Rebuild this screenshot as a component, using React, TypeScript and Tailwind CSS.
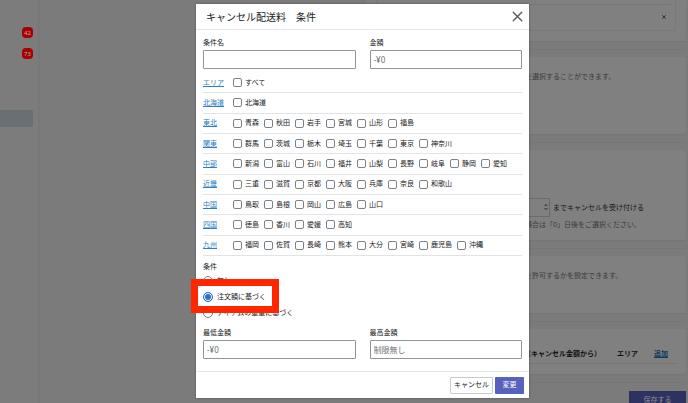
import { X, ChevronUp, ChevronDown } from 'lucide-react';

const regions: { name: string; items: string[] }[] = [
  { name: 'エリア', items: ['すべて'] },
  { name: '北海道', items: ['北海道'] },
  { name: '東北', items: ['青森', '秋田', '岩手', '宮城', '山形', '福島'] },
  { name: '関東', items: ['群馬', '茨城', '栃木', '埼玉', '千葉', '東京', '神奈川'] },
  { name: '中部', items: ['新潟', '富山', '石川', '福井', '山梨', '長野', '岐阜', '静岡', '愛知'] },
  { name: '近畿', items: ['三重', '滋賀', '京都', '大阪', '兵庫', '奈良', '和歌山'] },
  { name: '中国', items: ['鳥取', '島根', '岡山', '広島', '山口'] },
  { name: '四国', items: ['徳島', '香川', '愛媛', '高知'] },
  { name: '九州', items: ['福岡', '佐賀', '長崎', '熊本', '大分', '宮崎', '鹿児島', '沖縄'] },
];

function Field({ id, label, placeholder }: { id: string; label: string; placeholder?: string }) {
  return (
    <div className="flex min-w-0 flex-col gap-[2px]">
      <label htmlFor={id} className="text-[7px] leading-[10px]">{label}</label>
      <input
        id={id}
        type="text"
        placeholder={placeholder}
        className="h-[19px] w-full rounded-[1px] border border-[#8f9499] bg-white px-[3px] text-[8px] outline-none placeholder:text-[#6d7175]"
      />
    </div>
  );
}

function Choice({ id, label, selected, annotated }: { id: string; label: string; selected?: boolean; annotated?: boolean }) {
  return (
    <div className="relative flex h-4 items-center gap-1">
      <input
        id={id}
        type="radio"
        name="basis"
        defaultChecked={selected}
        className="size-[10px] appearance-none rounded-full border border-[#7c8186] bg-white checked:border-[#2c6ecb] checked:bg-[#2c6ecb] checked:shadow-[inset_0_0_0_1px_white]"
      />
      <label htmlFor={id} className="text-[7px] leading-[10px]">{label}</label>
      {annotated && <div className="pointer-events-none absolute -top-[10px] -left-3 z-10 h-[34px] w-[88px] border-[7px] border-[#ff2600]" />}
    </div>
  );
}

function Backdrop() {
  return (
    <div className="flex h-full bg-[#7b7b7b]">
      <aside className="flex w-10 shrink-0 flex-col items-end border-r-2 border-[#777878] bg-[#7c7c7c] pt-[27px] pr-[5px]">
        <span className="flex h-[11px] w-[11px] items-center justify-center rounded-[4px] bg-[#a80000] text-[6px] leading-none text-[#c4a8a8]">42</span>
        <span className="mt-[10px] flex h-[11px] w-[11px] items-center justify-center rounded-[4px] bg-[#a80000] text-[6px] leading-none text-[#c4a8a8]">73</span>
        <div className="mt-[51px] h-[17px] w-full rounded-r-[1px] bg-[#697074]" />
      </aside>
      <main className="flex min-w-0 flex-1 flex-col items-end overflow-hidden pr-[2px] text-[7px] leading-[10px]">
        <section className="h-[41px] w-80 shrink-0 rounded-b-[2px] bg-[#808080] pr-[10px] pb-[10px] pl-[10px] shadow-xs">
          <div className="h-full border border-t-0 border-[#797979] px-1 pt-1">
            <div className="flex h-6 items-center justify-end border-t border-[#757575] pr-1">
              <button type="button" aria-label="削除"><X className="size-[6px] text-[#303030]" strokeWidth={4} /></button>
            </div>
          </div>
        </section>
        <hr className="mt-2 w-80 shrink-0 border-[#767676]" />
        <section className="mt-[7px] h-[77px] w-80 shrink-0 rounded-[2px] bg-[#808080] pt-[15px] shadow-xs">
          <p className="pl-[159px] text-[#3a3c3d]">を選択することができます。</p>
        </section>
        <hr className="mt-2 w-80 shrink-0 border-[#767676]" />
        <section className="mt-[7px] h-[90px] w-80 shrink-0 rounded-[2px] bg-[#808080] pt-12 shadow-xs">
          <div className="flex items-center gap-[3px] text-[#141516]">
            <div className="relative ml-24 w-[88px]">
              <select id="deadline" aria-label="日数" className="block h-[19px] w-full appearance-none border border-[#6b6b6b]" />
              <span className="pointer-events-none absolute top-[5px] right-[2px] flex flex-col">
                <ChevronUp className="size-1" strokeWidth={6} />
                <ChevronDown className="size-1" strokeWidth={6} />
              </span>
            </div>
            <label htmlFor="deadline">までキャンセルを受け付ける</label>
          </div>
          <p className="mt-[3px] pl-[159px] whitespace-nowrap text-[#3a3c3d]">場合は「0」日後をご選択ください。</p>
        </section>
        <hr className="mt-2 w-80 shrink-0 border-[#767676]" />
        <section className="mt-[7px] h-[57px] w-80 shrink-0 rounded-[2px] bg-[#808080] pt-[15px] shadow-xs">
          <p className="pl-[159px] text-[#3a3c3d]">を許可するかを設定できます。</p>
        </section>
        <hr className="mt-2 w-80 shrink-0 border-[#767676]" />
        <section className="mt-[7px] h-[45px] w-80 shrink-0 rounded-[2px] bg-[#808080] px-[10px] pt-[15px] shadow-xs">
          <div className="flex h-5 items-center justify-end border-b border-[#747474] pr-2 font-bold text-[#101112]">
            <span className="mr-4">（キャンセル金額から）</span>
            <span className="mr-4">エリア</span>
            <a href="#add" className="text-[#0b3c5e] underline">追加</a>
          </div>
        </section>
        <hr className="mt-2 w-80 shrink-0 border-[#767676]" />
        <button type="button" className="mt-2 h-[17px] w-[57px] shrink-0 bg-[#2e3260] text-[7px] leading-[10px] text-[#8b8b8b]">保存する</button>
      </main>
    </div>
  );
}

export default function App() {
  return (
    <div className="relative h-screen overflow-hidden font-['Noto_Sans','Noto_Sans_CJK_JP',sans-serif] text-[#202223]">
      <Backdrop />
      <div className="absolute inset-0 flex items-start justify-center pt-1 pl-[37px]">
        <div role="dialog" aria-labelledby="dialog-title" className="flex w-[333px] flex-col bg-white shadow-[0_0_2px_#505050]">
          <header className="flex h-[26px] items-center justify-between border-b border-[#e4e5e7] pr-[3px] pl-[10px]">
            <h1 id="dialog-title" className="text-[10px] leading-4">キャンセル配送料　条件</h1>
            <button type="button" aria-label="閉じる"><X className="size-[17px] text-[#5c5f62]" strokeWidth={2} /></button>
          </header>
          <div className="px-[7px] pt-2 pb-3">
            <div className="grid grid-cols-2 gap-[14px]">
              <Field id="name" label="条件名" />
              <Field id="amount" label="金額" placeholder="-¥0" />
            </div>
            <div className="mt-1 grid min-h-[183px] auto-rows-fr">
              {regions.map((region) => (
                <div key={region.name} className="flex items-center border-b border-[#e1e3e5] text-[7px] leading-[10px]">
                  <a href="#region" className="w-[30px] shrink-0 text-[#2c7fc4] underline">{region.name}</a>
                  <div className="flex gap-[5px]">
                    {region.items.map((item) => (
                      <label key={item} className="flex items-center gap-[3px] whitespace-nowrap">
                        <input type="checkbox" className="size-[9px] shrink-0 appearance-none rounded-[2px] border border-[#7c8186] bg-white" />
                        {item}
                      </label>
                    ))}
                  </div>
                </div>
              ))}
            </div>
            <fieldset className="mt-[6px]">
              <legend className="text-[7px] leading-[10px]">条件</legend>
              <div className="mt-px">
                <Choice id="none" label="無し" />
                <Choice id="order" label="注文額に基づく" selected annotated />
                <Choice id="weight" label="アイテムの重量に基づく" />
              </div>
            </fieldset>
            <div className="mt-[7px] grid grid-cols-2 gap-[14px]">
              <Field id="min" label="最低金額" placeholder="-¥0" />
              <Field id="max" label="最高金額" placeholder="制限無し" />
            </div>
          </div>
          <footer className="flex h-[27px] items-center justify-end gap-[2px] border-t border-[#e4e5e7] pr-[5px] text-[7px]">
            <button type="button" className="h-[17px] w-[43px] rounded-[1px] border border-[#c9cccf] whitespace-nowrap">キャンセル</button>
            <button type="button" className="h-[17px] w-[29px] rounded-[1px] bg-[#5762bc] text-white">変更</button>
          </footer>
        </div>
      </div>
    </div>
  );
}
